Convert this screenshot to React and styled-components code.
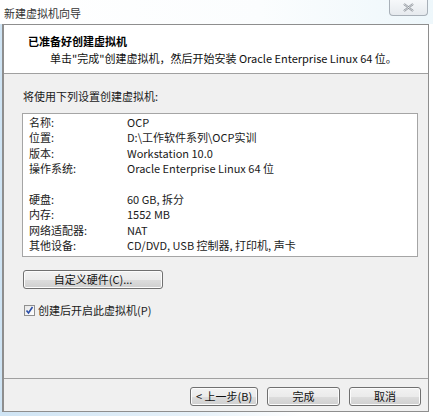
import React from 'react'
import styled, { createGlobalStyle } from 'styled-components'

const GlobalStyle = createGlobalStyle`
  html, body { margin: 0; padding: 0; }
  body {
    width: 433px;
    height: 416px;
    overflow: hidden;
    font-family: "Noto Sans CJK SC", "Liberation Sans", sans-serif;
    font-size: 11px;
    color: #1a1a1a;
    background: linear-gradient(90deg, #cfe4f4 0%, #e6f1f9 45%, #ffffff 70%);
  }
`

const Page = styled.div`
  width: 433px;
  height: 416px;
  display: flex;
  flex-direction: column;
`

const TitleBar = styled.div`
  height: 24px;
  display: flex;
  justify-content: space-between;
  align-items: flex-start;
  background: linear-gradient(90deg, #ffffff 0%, #fbfdfe 60%, #eef7fb 100%);
`

const Title = styled.div`
  padding: 5px 0 0 4px;
  font-size: 11px;
  line-height: 16px;
  color: #333;
`

const CloseButton = styled.div`
  width: 39px;
  height: 16px;
  margin-right: 5px;
  box-sizing: border-box;
  border: 1px solid #a8b0b8;
  border-top: none;
  border-radius: 0 0 4px 4px;
  background: linear-gradient(#f6f8fa, #e6eaee);
  display: flex;
  align-items: center;
  justify-content: center;
`

const Frame = styled.div`
  width: 427px;
  height: 388px;
  margin-left: 2px;
  box-sizing: border-box;
  border: 1px solid #8e8e8e;
  border-left-width: 2px;
  background: #f0f0f0;
  display: flex;
  flex-direction: column;
`

const Header = styled.div`
  height: 49px;
  box-sizing: border-box;
  background: #fff;
  border-bottom: 1px solid #a0a0a0;
  padding: 8px 0 0 24px;
`

const Heading = styled.div`
  font-weight: bold;
  font-size: 11px;
  line-height: 17px;
  color: #000;
`

const SubHeading = styled.div`
  padding-left: 22px;
  line-height: 17px;
  color: #111;
`

const Body = styled.div`
  flex: 1;
  padding: 14px 10px 0 18px;
`

const Intro = styled.div`
  line-height: 16px;
  padding-left: 1px;
`

const SummaryBox = styled.div`
  width: 396px;
  box-sizing: border-box;
  margin-top: 9px;
  background: #fff;
  border: 1px solid #a5a5a5;
  padding: 1px 0 2px 6px;
`

const Row = styled.div`
  display: grid;
  grid-template-columns: 98px 1fr;
  height: 15.4px;
  line-height: 15.4px;
  white-space: nowrap;
`

const Gap = styled.div`
  height: 15.4px;
`

const PushButton = styled.button`
  width: ${p => p.$w}px;
  height: 19px;
  padding: 0;
  box-sizing: border-box;
  font-family: inherit;
  font-size: 11px;
  line-height: 17px;
  color: #111;
  border: 1px solid #707070;
  border-radius: 3px;
  background: linear-gradient(#f2f2f2 0%, #ebebeb 50%, #dddddd 51%, #cfcfcf 100%);
  box-shadow: inset 0 0 0 1px #fcfcfc;
`

const CustomButton = styled(PushButton)`
  margin-top: 13px;
  margin-left: 1px;
  display: block;
`

const CheckRow = styled.label`
  margin-top: 14px;
  display: flex;
  align-items: center;
  gap: 3px;
  line-height: 15px;
  padding-left: 2px;
`

const CheckBox = styled.span`
  width: 11px;
  height: 11px;
  box-sizing: border-box;
  border: 1px solid #8f8f8f;
  background: linear-gradient(135deg, #e6e6e6, #ffffff);
  display: flex;
  align-items: center;
  justify-content: center;
`

const Footer = styled.div`
  height: 33px;
  box-sizing: border-box;
  border-top: 1px solid #a0a0a0;
  padding: 8px 7px 0 0;
  display: flex;
  justify-content: flex-end;
  gap: 9px;
`

const rows = [
  ['名称:', 'OCP'],
  ['位置:', 'D:\\工作软件系列\\OCP实训'],
  ['版本:', 'Workstation 10.0'],
  ['操作系统:', 'Oracle Enterprise Linux 64 位'],
  null,
  ['硬盘:', '60 GB, 拆分'],
  ['内存:', '1552 MB'],
  ['网络适配器:', 'NAT'],
  ['其他设备:', 'CD/DVD, USB 控制器, 打印机, 声卡'],
]

export default function App() {
  return (
    <Page>
      <GlobalStyle />
      <TitleBar>
        <Title>新建虚拟机向导</Title>
        <CloseButton>
          <svg width="11" height="9" viewBox="0 0 11 9">
            <path d="M1 1 L10 8 M10 1 L1 8" stroke="#8a8f96" strokeWidth="2.2" fill="none" />
            <path d="M1 1 L10 8 M10 1 L1 8" stroke="#eef0f2" strokeWidth="0.8" fill="none" />
          </svg>
        </CloseButton>
      </TitleBar>
      <Frame>
        <Header>
          <Heading>已准备好创建虚拟机</Heading>
          <SubHeading>单击"完成"创建虚拟机，然后开始安装 Oracle Enterprise Linux 64 位。</SubHeading>
        </Header>
        <Body>
          <Intro>将使用下列设置创建虚拟机:</Intro>
          <SummaryBox>
            {rows.map((r, i) =>
              r ? (
                <Row key={i}>
                  <span>{r[0]}</span>
                  <span>{r[1]}</span>
                </Row>
              ) : (
                <Gap key={i} />
              )
            )}
          </SummaryBox>
          <CustomButton $w={140}>自定义硬件(C)...</CustomButton>
          <CheckRow>
            <CheckBox>
              <svg width="9" height="9" viewBox="0 0 9 9">
                <path d="M1.5 4.5 L3.5 7 L7.5 1" stroke="#2a4ea8" strokeWidth="1.6" fill="none" />
              </svg>
            </CheckBox>
            创建后开启此虚拟机(P)
          </CheckRow>
        </Body>
        <Footer>
          <PushButton $w={68}>&lt; 上一步(B)</PushButton>
          <PushButton $w={73}>完成</PushButton>
          <PushButton $w={72}>取消</PushButton>
        </Footer>
      </Frame>
    </Page>
  )
}
